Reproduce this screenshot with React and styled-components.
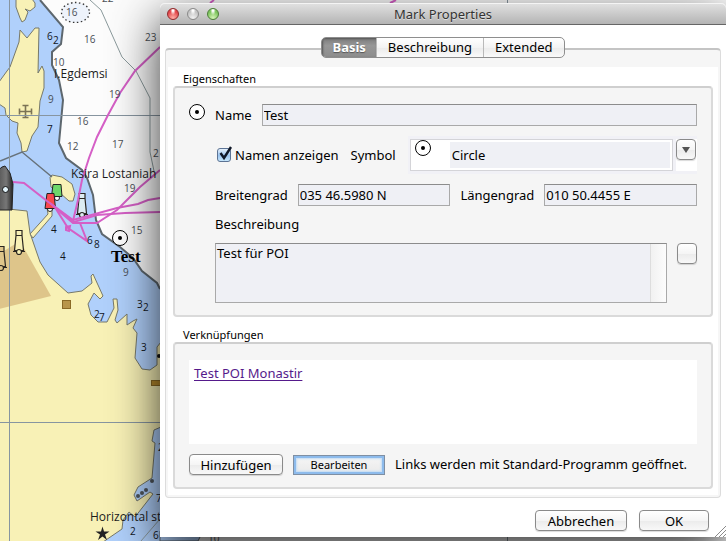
import React from "react";
import styled, { createGlobalStyle, css } from "styled-components";

const GlobalStyle = createGlobalStyle`
  *, *::before, *::after { box-sizing: border-box; }
  body {
    margin: 0;
    background: #b0d0fb;
    color: #000;
    font-family: "Noto Sans", "Open Sans", sans-serif;
    font-size: 13px;
    line-height: 17px;
  }
  button, input, textarea, select { font: inherit; color: inherit; margin: 0; }
`;

/* ---------- desktop and chart ---------- */

const Desktop = styled.main`
  position: relative;
  display: grid;
  grid-template-columns: 160px minmax(0, 1fr);
  align-items: start;
  min-height: 100vh;
  padding: 3px 0 4px;
  overflow: hidden;
`;

const ChartSvg = styled.svg`
  position: absolute;
  inset: 0;
  width: 100%;
  height: 100%;
`;

const Sounding = styled.text`
  font-family: "Open Sans", "Noto Sans", sans-serif;
  font-size: 10px;
  fill: ${(p) => (p.$strong ? "#10151c" : "#4a4f55")};
`;

const PlaceName = styled.text`
  font-family: "Open Sans", "Noto Sans", sans-serif;
  font-size: 12px;
  fill: #1c1c1c;
`;

const MarkName = styled.text`
  font-family: "Liberation Serif", serif;
  font-size: 17px;
  font-weight: bold;
  fill: #000;
`;

const SOUNDINGS = [
  ["16", 66, 16], ["16", 84, 43], ["22", 102, 2], ["23", 145, 41], ["10", 53, 66],
  ["19", 109, 98], ["16", 77, 125], ["12", 67, 150], ["17", 112, 148], ["2", 153, 157],
  ["19", 124, 192], ["15", 131, 234], ["9", 48, 103], ["9", 123, 276],
  ["6", 47, 40, true], ["2", 53, 44, true], ["7", 47, 133, true],
  ["4", 51, 233, true], ["4", 60, 260, true], ["6", 87, 244, true], ["8", 94, 248, true],
  ["3", 137, 308, true], ["2", 143, 311, true], ["2", 94, 318, true], ["7", 99, 321, true],
  ["3", 141, 351, true], ["2", 130, 535, true], ["6", 153, 539, true],
  ["2", 158, 451, true], ["7", 156, 502, true], ["10", 208, 542],
];

const CircleMark = () => (
  <>
    <circle r="7.500" fill="#fff" stroke="#000" />
    <circle r="2" fill="#000" />
  </>
);

const Tower = ({ x, y, fill }) => (
  <g transform={`translate(${x} ${y})`} fill={fill} stroke="#2a2620" strokeWidth="1.200">
    <path d="M-3 -21.500H3V-16.500H-3ZM-3 -16.500H3L4.500 -1.500H-4.500ZM-6 -0.500H6" />
    <circle r="2.500" />
  </g>
);

function Chart() {
  return (
    <ChartSvg viewBox="0 0 726 541" preserveAspectRatio="xMinYMin slice" aria-label="Seekarte">
      <defs>
        <linearGradient id="hull" x1="0" x2="1">
          <stop offset="0" stopColor="#4d4d4d" />
          <stop offset="0.6" stopColor="#777" />
          <stop offset="1" stopColor="#222" />
        </linearGradient>
      </defs>
      <rect width="726" height="541" fill="#b0d0fb" />
      <path
        d="M40 0L63 27 61 44 52 52 52 65 59 80 63 100 59 143 66 158 82 170 87 178 93 195 96 220 102 234 120 247 133 258 142 271 157 283 160 289 726 289V0Z"
        fill="#fcfcfc"
      />
      <rect x="198" y="500" width="528" height="41" fill="#fcfcfc" />
      <path
        d="M40 0L63 27 61 44 52 52 52 65 59 80 63 100 59 143 66 158 82 170 87 178 93 195 96 220 102 234 120 247 133 258 142 271 157 283 160 289"
        fill="none" stroke="#5d676e" strokeWidth="2"
      />
      <path d="M90 0L101 10 122 57 136 71 150 98V152L154 171" fill="none" stroke="#8b9a9c" />

      <g fill="#f8f1b6" stroke="#77796a">
        <path d="M16 -1V7L20 18 22 22 25 20 28 12 25 9 30 11 35 7V3L32 -1Z" />
        <path d="M20 30L27 38 35 28 39 28 38 73 42 66 44 71V88L40 101 38 127 32 136 27 151 22 152 21 143 17 133 18 123 12 121 6 115 5 108 -1 104V82L7 71 10 67 19 42Z" />
        <path d="M50 177L52 175 62 177 72 184 75 194 73 201 69 201 60 193 51 187Z" />
        <path d="M-1 208L27 211 30 233 40 262 48 275 68 293 82 291 92 283 91 276 93 274 103 296 100 299 94 293 88 304 91 315 98 322 107 322 114 308 113 299H117L118 310 115 320 117 323 127 314 127 325 133 321 137 319 133 328 137 333 135 358 142 369 150 370 157 365V347L161 342V427L154 430 152 441 155 443 152 478 138 487 134 495 137 501 150 492 153 494 135 517 129 512 123 520 122 529 103 542H-1Z" />
        <path d="M47 208H52V216L33 238 30 234 48 214Z" />
      </g>
      <path d="M-1 254L20 241 51 296 -1 309Z" fill="#dec58a" />
      <path d="M0 161L22 152 52 177" fill="none" stroke="#67727a" strokeWidth="1.500" />
      <path d="M141 541L160 519" stroke="#8b9a9c" />
      <path d="M160 541H198L203 531H160Z" fill="#b0d0fb" stroke="#5d676e" />

      <circle cx="138" cy="496" r="2" fill="#4e555c" />
      <circle cx="142" cy="493" r="2" fill="#4e555c" />
      <circle cx="146" cy="490" r="2" fill="#4e555c" />
      <circle cx="152" cy="481" r="2" fill="#4e555c" />
      <rect x="62.500" y="300.500" width="8" height="8" fill="#b8964a" stroke="#8a6a25" />
      <rect x="151.500" y="380.500" width="10" height="5" fill="#b98c2c" stroke="#8a6a25" />
      <circle cx="159" cy="356" r="2" fill="#111" />

      <path
        d="M25.500 106V117M20 111.500H31M22.500 105.500H28.500M22.500 117.500H28.500M19.500 108.500V114.500M31.500 108.500V114.500"
        fill="none" stroke="#7b7355" strokeWidth="1.600"
      />
      <path d="M9.500 0V541M0 115.500H726M0 422.500H726M507.500 0V541" stroke="#8795a0" />

      <ellipse
        cx="75.500" cy="12.500" rx="14" ry="10"
        fill="#eef3fb" stroke="#333" strokeWidth="1.300" strokeDasharray="1.500 2.500"
      />

      <Tower x={19} y={252} fill="#f8f1b6" />
      <Tower x={1} y={268} fill="#dec58a" />
      <Tower x={82} y={215} fill="#dcecf2" />
      <circle cx="57" cy="198" r="2.500" fill="#fff" stroke="#222" />
      <path d="M53 184.500H61L62 196.500H51.500Z" fill="#6ed76a" stroke="#222" />
      <circle cx="50" cy="209" r="2.500" fill="#fff" stroke="#222" />
      <path d="M47 193.500H54L55.500 208.500H45Z" fill="#f8484c" stroke="#222" />

      <g fill="none" stroke="#d55fc6" strokeWidth="2">
        <path d="M160 47L135 71 120 93 108 115 97 137 89 158 82 180 78 200 73 221" />
        <path d="M13 182L24 183 47 201 73 220 117 208 138 204 148 200 160 198" />
        <path d="M50 203L74 222 97 215 125 213 160 212" />
        <path d="M53 206L73 223H97L117 210 140 187 160 170" />
        <path d="M56 209L68 228 87 241 80 223M66 227L70 226 69 231 66 230Z" />
        <path d="M210 3L214 0M390 3L396 0" />
      </g>

      <path d="M-4 210V172L2 167 5 166 10 173 13 184 12 210Z" fill="url(#hull)" stroke="#222" />
      <circle cx="5.500" cy="189.500" r="3" fill="#e2f3fa" stroke="#111" />

      {SOUNDINGS.map(([value, x, y, strong]) => (
        <Sounding key={`${x}-${y}`} x={x} y={y} $strong={strong}>{value}</Sounding>
      ))}
      <PlaceName x="54" y="78">I.Egdemsi</PlaceName>
      <PlaceName x="71" y="178">Ksira Lostaniah</PlaceName>
      <PlaceName x="90" y="521">Horizontal stripes</PlaceName>
      <path d="M102.500 526.500L104 531.500H109.500L105 534.500 107 540 102.500 536.500 98 540 100 534.500 95.500 531.500H101Z" fill="#222" />
      <g transform="translate(120 238)"><CircleMark /></g>
      <MarkName x="111" y="262">Test</MarkName>
    </ChartSvg>
  );
}

/* ---------- dialog frame ---------- */

const Dialog = styled.section`
  position: relative;
  grid-column: 2;
  display: flex;
  flex-direction: column;
  background: #fff;
  border-radius: 5px 5px 0 0;
  box-shadow: 0 16px 48px rgba(0, 0, 0, 0.8);
`;

const TitleBar = styled.header`
  display: grid;
  grid-template-columns: 60px 1fr 60px;
  align-items: center;
  height: 22px;
  padding: 0 7px;
  border-bottom: 1px solid #666;
  border-radius: 5px 5px 0 0;
  background: linear-gradient(#e2e2e2, #b4b4b4);
  box-shadow: inset 0 1px #f4f4f4;
`;

const Lights = styled.div`
  display: flex;
  gap: 8px;
`;

const LIGHTS = {
  close: ["#ffb0a8", "#e2474a", "#8f2a2c"],
  idle: ["#f2f2f2", "#c4c4c4", "#8a8a8a"],
  zoom: ["#d6f5b8", "#7cc45c", "#4b7d38"],
};

const Light = styled.button`
  width: 12px;
  height: 12px;
  padding: 0;
  border: 1px solid ${(p) => LIGHTS[p.$kind][2]};
  border-radius: 50%;
  background: radial-gradient(ellipse at 50% 15%, #fff 8%, transparent 38%),
    radial-gradient(circle at 50% 90%, ${(p) => LIGHTS[p.$kind][0]}, ${(p) => LIGHTS[p.$kind][1]} 65%);
`;

const Title = styled.h1`
  margin: 0;
  text-align: center;
  font-size: 13px;
  font-weight: 400;
  line-height: 20px;
  color: #333;
  text-shadow: 0 1px rgba(255, 255, 255, 0.5);
`;

const Tabs = styled.div`
  position: relative;
  z-index: 1;
  display: flex;
  align-self: center;
  margin: 12px 0 -10px;
  border: 1px solid #8e8e8e;
  border-radius: 5px;
  background: linear-gradient(#fff, #f3f3f3 50%, #ebebeb 51%, #fafafa);
  overflow: hidden;
`;

const Tab = styled.button`
  height: 19px;
  padding: 0 11px;
  border: 0;
  background: none;
  line-height: 19px;

  & + & { border-left: 1px solid #b9b9b9; }

  ${(p) =>
    p.$active &&
    css`
      padding: 0 10px;
      background: linear-gradient(#7c7c7c, #979797 40%, #8d8d8d);
      box-shadow: inset 1px 1px 2px #555;
      color: #fff;
      font-weight: 700;
      text-shadow: 0 1px 1px #555;
    `}
`;

const Pane = styled.div`
  margin: 0 5px;
  padding: 17px 2px 2px;
  border: 1px solid #dcdcdc;
  border-top: 2px solid #c4c4c4;
  border-radius: 4px;
  background: #f6f6f6;
`;

const PaneBody = styled.div`
  display: flex;
  flex-direction: column;
  gap: 11px;
  padding: 5px 5px 6px;
  background: #fff;
`;

const GroupTitle = styled.h2`
  margin: 0;
  padding: 0 10px;
  font-size: 11px;
  font-weight: 400;
  line-height: 14px;
`;

const GroupBox = styled.div`
  display: grid;
  gap: 10px;
  padding: 16px 14px 12px;
  border: 2px solid #dadada;
  border-radius: 4px;
  border-top-color: #cfcfcf;
  background: #f5f5f5;
`;

/* ---------- form parts ---------- */

const PropertyGrid = styled.div`
  display: grid;
  grid-template-columns: 16px minmax(0, 1fr);
  gap: 10px;

  & > :not(svg) { grid-column: 2; }
`;

const MarkIcon = styled.svg`
  flex: none;
  width: 16px;
  height: 16px;
`;

const Mark = () => (
  <MarkIcon viewBox="-8 -8 16 16" aria-hidden="true"><CircleMark /></MarkIcon>
);

const Row = styled.div`
  display: flex;
  align-items: ${(p) => (p.$top ? "flex-start" : "center")};
  gap: 10px;
`;

const TextInput = styled.input`
  flex: 1 1 0;
  min-width: 0;
  height: 22px;
  padding: 0 1px 1px;
  border: 1px solid #a9a9a9;
  border-top-color: #8c8c8c;
  border-radius: 0;
  background: #eff0f5;
`;

const CheckLabel = styled.label`
  display: flex;
  align-items: center;
  gap: 4px;
  padding: 0 2px;
`;

const CheckFrame = styled.span`
  position: relative;
  display: flex;
`;

const CheckInput = styled.input`
  appearance: none;
  width: 14px;
  height: 14px;
  border: 1px solid #5c7394;
  border-radius: 3px;
  background: linear-gradient(#e6f1fc, #9cc5f0 55%, #c6e6fb);
`;

const CheckTick = styled.svg`
  position: absolute;
  left: 1px;
  top: -3px;
  width: 15px;
  height: 16px;
  pointer-events: none;
`;

const Combo = styled.div`
  flex: 1;
  display: flex;
  align-items: flex-start;
  gap: 3px;
  margin-left: 2px;
  padding: 3px 0 3px 2px;
  background: #f1f1f6;
`;

const ComboField = styled.div`
  flex: 1;
  display: flex;
  align-items: flex-start;
  gap: 19px;
  height: 32px;
  padding: 0 2px 0 4px;
  border: 1px solid #d4d4d8;
  background: #fff;
`;

const ComboSelect = styled.select`
  flex: 1;
  align-self: center;
  height: 26px;
  padding: 0 2px;
  border: 0;
  border-radius: 0;
  appearance: none;
  background: #eff0f5;
`;

const ComboSide = styled.div`
  height: 32px;
  padding-right: 1px;
  background: #fff;
`;

const Button = styled.button`
  height: 21px;
  padding: 0 10px;
  border: 1px solid #8a8a8a;
  border-radius: 4px;
  background: linear-gradient(#fff, #f5f5f5 50%, #ebebeb 51%, #f8f8f8);
  box-shadow: 0 1px 1px rgba(0, 0, 0, 0.15);
  line-height: 18px;
  ${(p) => p.$wide && css`min-width: ${p.$wide}px;`}
`;

const IconButton = styled(Button)`
  display: grid;
  place-items: center;
  flex: none;
  width: 20px;
  padding: 0;
`;

const FocusedButton = styled(Button)`
  height: 20px;
  border-color: #7f8fa3;
  border-radius: 0;
  background: linear-gradient(#f6f6f6, #e9e9e9);
  box-shadow: inset 0 0 0 2px #8dbbec, inset 0 0 2px 3px #c3dcf5;
  font-size: 11px;
  line-height: 16px;
`;

const NotesFrame = styled.div`
  flex: 1;
  display: flex;
  height: 60px;
  border: 1px solid #a9a9a9;
  border-top-color: #8c8c8c;
  background: #eff0f5;
`;

const Notes = styled.textarea`
  flex: 1;
  min-width: 0;
  padding: 1px;
  border: 0;
  background: none;
  resize: none;
  overflow: hidden;
`;

const ScrollTrack = styled.div`
  width: 16px;
  border-left: 1px solid #ddd;
  background: linear-gradient(90deg, #f1f1f1, #fcfcfc);
`;

const LinkList = styled.div`
  min-height: 84px;
  padding: 5px;
  background: #fff;
`;

const Link = styled.a`
  color: #551a8b;
  text-underline-offset: 2px;
`;

const Footer = styled.footer`
  display: flex;
  justify-content: flex-end;
  gap: 12px;
  padding: 12px 17px 6px;
`;

const Grip = styled.svg`
  position: absolute;
  right: 0;
  bottom: 0;
  width: 12px;
  height: 12px;
`;

export default function App() {
  return (
    <Desktop>
      <GlobalStyle />
      <Chart />
      <Dialog role="dialog" aria-labelledby="dialog-title">
        <TitleBar>
          <Lights>
            <Light $kind="close" aria-label="Schließen" />
            <Light $kind="idle" aria-label="Minimieren" />
            <Light $kind="zoom" aria-label="Vergrößern" />
          </Lights>
          <Title id="dialog-title">Mark Properties</Title>
        </TitleBar>

        <Tabs role="tablist">
          <Tab role="tab" aria-selected="true" $active>Basis</Tab>
          <Tab role="tab" aria-selected="false">Beschreibung</Tab>
          <Tab role="tab" aria-selected="false">Extended</Tab>
        </Tabs>

        <Pane role="tabpanel">
          <PaneBody>
            <section>
              <GroupTitle>Eigenschaften</GroupTitle>
              <GroupBox>
                <PropertyGrid>
                  <Mark />
                  <Row>
                    <label htmlFor="name">Name</label>
                    <TextInput id="name" defaultValue="Test" />
                  </Row>
                  <Row>
                    <CheckLabel>
                      <CheckFrame>
                        <CheckInput type="checkbox" defaultChecked />
                        <CheckTick viewBox="0 0 15 16" aria-hidden="true">
                          <path d="M2.500 8L6 13 13 2" fill="none" stroke="#101828" strokeWidth="2.400" />
                        </CheckTick>
                      </CheckFrame>
                      Namen anzeigen
                    </CheckLabel>
                    <label htmlFor="symbol">Symbol</label>
                    <Combo>
                      <ComboField>
                        <Mark />
                        <ComboSelect id="symbol" defaultValue="Circle">
                          <option>Circle</option>
                        </ComboSelect>
                      </ComboField>
                      <ComboSide>
                        <IconButton aria-label="Symbol wählen">
                          <svg width="8" height="6" aria-hidden="true">
                            <path d="M0 0H8L4 6Z" fill="#555" />
                          </svg>
                        </IconButton>
                      </ComboSide>
                    </Combo>
                  </Row>
                  <Row>
                    <label htmlFor="lat">Breitengrad</label>
                    <TextInput id="lat" defaultValue="035 46.5980 N" />
                    <label htmlFor="lon">Längengrad</label>
                    <TextInput id="lon" defaultValue="010 50.4455 E" />
                  </Row>
                  <label htmlFor="notes">Beschreibung</label>
                  <Row $top>
                    <NotesFrame>
                      <Notes id="notes" defaultValue="Test für POI" />
                      <ScrollTrack />
                    </NotesFrame>
                    <IconButton aria-label="Beschreibung bearbeiten" />
                  </Row>
                </PropertyGrid>
              </GroupBox>
            </section>

            <section>
              <GroupTitle>Verknüpfungen</GroupTitle>
              <GroupBox>
                <LinkList>
                  <Link href="#poi">Test POI Monastir</Link>
                </LinkList>
                <Row>
                  <Button $wide={94}>Hinzufügen</Button>
                  <FocusedButton $wide={92}>Bearbeiten</FocusedButton>
                  <span>Links werden mit Standard-Programm geöffnet.</span>
                </Row>
              </GroupBox>
            </section>
          </PaneBody>
        </Pane>

        <Footer>
          <Button $wide={92}>Abbrechen</Button>
          <Button $wide={70}>OK</Button>
        </Footer>
        <Grip viewBox="0 0 12 12" aria-hidden="true">
          <path d="M1 12L12 1M5 12L12 5M9 12L12 9" stroke="#8a8a8a" />
        </Grip>
      </Dialog>
    </Desktop>
  );
}
